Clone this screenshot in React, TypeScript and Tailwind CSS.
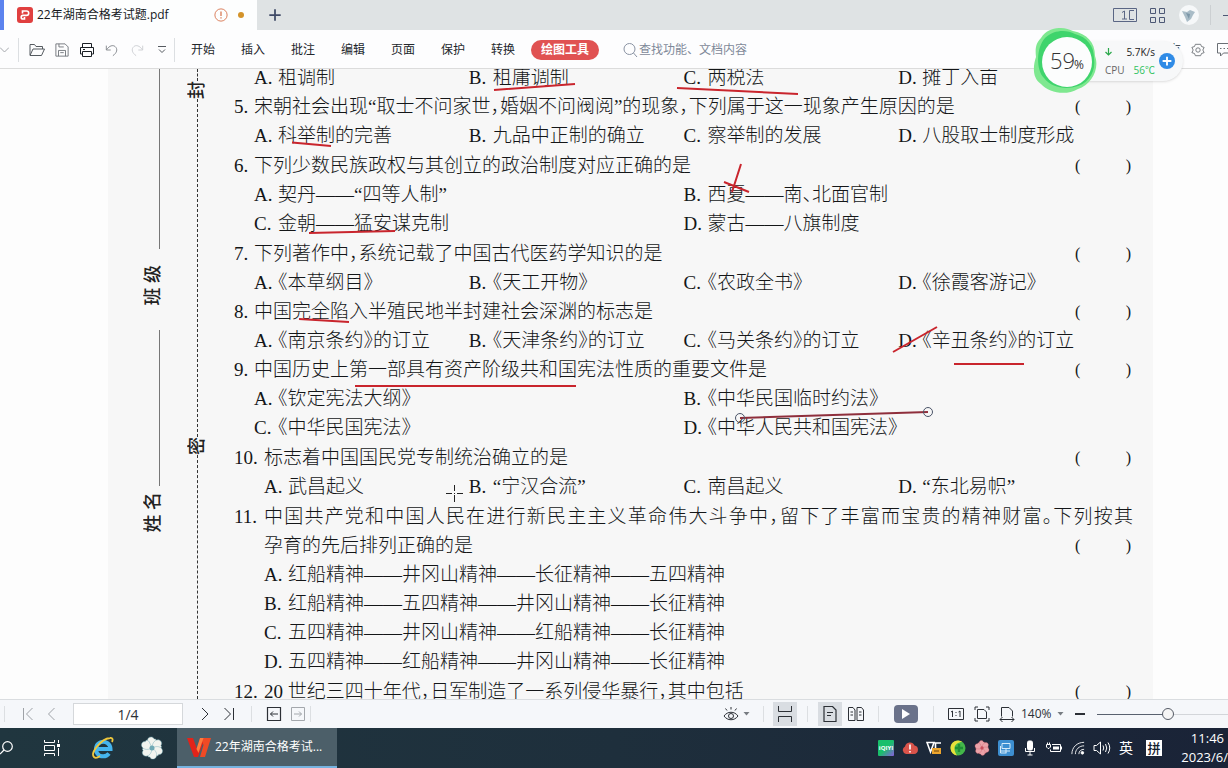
import { useState, type ReactNode } from "react";

const UI_FONT = "font-['Open_Sans','Noto_Sans_CJK_SC',sans-serif]";
const PAPER_FONT = "font-['Liberation_Serif','Noto_Sans_CJK_SC',serif]";

interface Option {
  label: string;
  text: string;
}

interface Question {
  no?: number;
  stem?: string[];
  cols: number;
  spaced?: boolean;
  options: Option[];
}

function opts(...texts: string[]): Option[] {
  return texts.map((text, i) => ({ label: "ABCD"[i] + ".", text }));
}

const questions: Question[] = [
  { cols: 4, options: opts("租调制", "租庸调制", "两税法", "摊丁入亩") },
  {
    no: 5,
    stem: ["宋朝社会出现“取士不问家世，婚姻不问阀阅”的现象，下列属于这一现象产生原因的是"],
    cols: 4,
    options: opts("科举制的完善", "九品中正制的确立", "察举制的发展", "八股取士制度形成"),
  },
  {
    no: 6,
    stem: ["下列少数民族政权与其创立的政治制度对应正确的是"],
    cols: 2,
    spaced: true,
    options: opts("契丹——“四等人制”", "西夏——南、北面官制", "金朝——猛安谋克制", "蒙古——八旗制度"),
  },
  {
    no: 7,
    stem: ["下列著作中，系统记载了中国古代医药学知识的是"],
    cols: 4,
    spaced: true,
    options: opts("《本草纲目》", "《天工开物》", "《农政全书》", "《徐霞客游记》"),
  },
  {
    no: 8,
    stem: ["中国完全陷入半殖民地半封建社会深渊的标志是"],
    cols: 4,
    options: opts("《南京条约》的订立", "《天津条约》的订立", "《马关条约》的订立", "《辛丑条约》的订立"),
  },
  {
    no: 9,
    stem: ["中国历史上第一部具有资产阶级共和国宪法性质的重要文件是"],
    cols: 2,
    options: opts("《钦定宪法大纲》", "《中华民国临时约法》", "《中华民国宪法》", "《中华人民共和国宪法》"),
  },
  {
    no: 10,
    stem: ["标志着中国国民党专制统治确立的是"],
    cols: 4,
    spaced: true,
    options: opts("武昌起义", "“宁汉合流”", "南昌起义", "“东北易帜”"),
  },
  {
    no: 11,
    stem: [
      "中国共产党和中国人民在进行新民主主义革命伟大斗争中，留下了丰富而宝贵的精神财富。下列按其",
      "孕育的先后排列正确的是",
    ],
    cols: 1,
    spaced: true,
    options: opts(
      "红船精神——井冈山精神——长征精神——五四精神",
      "红船精神——五四精神——井冈山精神——长征精神",
      "五四精神——井冈山精神——红船精神——长征精神",
      "五四精神——红船精神——井冈山精神——长征精神"
    ),
  },
  { no: 12, stem: ["20 世纪三四十年代，日军制造了一系列侵华暴行，其中包括"], cols: 4, spaced: true, options: [] },
];

const gridCols: Record<number, string> = {
  1: "grid-cols-1",
  2: "grid-cols-2",
  4: "grid-cols-4",
};

function Svg({ size = 16, className = "", children }: { size?: number; className?: string; children: ReactNode }) {
  return (
    <svg
      width={size}
      height={size}
      viewBox="0 0 16 16"
      fill="none"
      stroke="currentColor"
      strokeWidth="1"
      className={`shrink-0 ${className}`}
      aria-hidden="true"
    >
      {children}
    </svg>
  );
}

function IconButton({ label, className = "w-6", children }: { label: string; className?: string; children: ReactNode }) {
  return (
    <button aria-label={label} className={`flex h-6 shrink-0 items-center justify-center ${className}`}>
      {children}
    </button>
  );
}

function Sep({ className = "" }: { className?: string }) {
  return <span className={`h-4 w-px shrink-0 bg-[#dcdfe2] ${className}`} />;
}

function Caret() {
  return (
    <svg width="7" height="4" viewBox="0 0 7 4" className="shrink-0" aria-hidden="true">
      <path d="M0.5 0h6L3.5 3.5z" fill="#777c82" />
    </svg>
  );
}

function TitleBar() {
  return (
    <header className="flex h-[30px] shrink-0 items-center bg-[#dfe3e4]">
      <span className="h-full w-1 bg-[#5b83ee]" />
      <div className="flex h-full w-[253px] items-center bg-[#fdfefe] pl-[13px]">
        <svg width="16" height="16" viewBox="0 0 16 16" aria-hidden="true">
          <rect width="16" height="16" rx="3" fill="#e0403f" />
          <path
            d="M5.500 6.500V4h4a2.200 2.200 0 0 1 0 4.400H6a1.800 1.800 0 0 0 0 3.600h1.500V10"
            fill="none"
            stroke="#fff"
            strokeWidth="1.600"
          />
        </svg>
        <span className="ml-1 flex-1 text-xs text-[#15181c]">22年湖南合格考试题.pdf</span>
        <Svg size={14} className="text-[#d6714a]">
          <circle cx="8" cy="8" r="7" />
          <path d="M8 4v5M8 10.5v1.5" strokeWidth="1.4" />
        </Svg>
        <span className="mr-[13px] ml-2.5 size-1.5 rounded-full bg-[#d4932a]" />
      </div>
      <IconButton label="新建标签" className="ml-1.5 w-6">
        <Svg size={14} className="text-[#3f4a66]">
          <path d="M8 1.5v13M1.5 8h13" strokeWidth="2" />
        </Svg>
      </IconButton>
      <div className="flex-1" />
      <IconButton label="阅读模式" className="w-6">
        <svg width="24" height="14" viewBox="0 0 24 14" fill="none" stroke="#5a6684" aria-hidden="true">
          <path d="M0.5 0.5h23v13H0.5z" />
          <path d="M9 4.500l2.500-1.500V11M9 11h5M21 2.500h-4.500v9H21" />
        </svg>
      </IconButton>
      <IconButton label="应用" className="ml-2 w-6">
        <svg width="15" height="15" viewBox="0 0 15 15" fill="none" stroke="#4d5875" aria-hidden="true">
          <path d="M0.5 0.5h5v5h-5zM9.5 0.5h5v5h-5zM0.5 9.5h5v5h-5zM9.5 9.5h5v5h-5z" />
        </svg>
      </IconButton>
      <IconButton label="账户" className="ml-2 w-6">
        <svg width="20" height="20" viewBox="0 0 20 20" aria-hidden="true">
          <circle cx="10" cy="10" r="10" fill="#f6f8f9" />
          <path d="M3 6l5 1 3-2 5 2-2 3-2 4-4 3-2-5z" fill="#a9bcc7" />
          <path d="M7 8l4 1-1 5z" fill="#7c97a8" />
        </svg>
      </IconButton>
      <span className="ml-[9px] h-5 w-px bg-[#ccd0d2]" />
      <span className="ml-3 h-px w-[5px] bg-[#4d5875]" />
    </header>
  );
}

function Toolbar() {
  return (
    <div className="z-10 flex h-[39px] shrink-0 items-center border-b border-[#dcdcdc] bg-[#fdfdfe] pt-px">
      <IconButton label="更多" className="w-[9px]">
        <svg width="9" height="6" viewBox="0 0 9 6" fill="none" stroke="#a5a8ad" aria-hidden="true">
          <path d="M0 0.5l4.5 4.5L9 0.5" />
        </svg>
      </IconButton>
      <Sep className="mr-[5px] ml-[9px] h-6" />
      <IconButton label="打开" className="w-[25px]">
        <Svg className="text-[#555a60]">
          <path d="M1 13V2.5h4.5L7 4.5h6.5V7M1 13.5h11.5L15.5 7H4z" />
        </Svg>
      </IconButton>
      <IconButton label="保存" className="w-[25px]">
        <Svg size={14} className="text-[#6a6f75]">
          <path d="M1 1h10.5L15 4.500V15H1zM4 15V8.500h8V15M4.500 1v3.500H10M6 11h4" />
        </Svg>
      </IconButton>
      <IconButton label="打印" className="w-[25px]">
        <Svg className="text-[#1b1f24]">
          <path d="M3.500 5V1.500h9V5M3.500 12h-2V5.500h13V12h-2M3.500 9.500h9v5h-9zM4 7.500h2" />
        </Svg>
      </IconButton>
      <IconButton label="撤销" className="w-[25px]">
        <Svg size={14} className="text-[#7b8086]">
          <path d="M1.500 3v5h5M2 7.500C5 3 9 2 11.500 4c3.500 3 2 7.500-2.500 10.500" />
        </Svg>
      </IconButton>
      <IconButton label="恢复" className="w-[25px]">
        <Svg size={14} className="text-[#c9ccd0]">
          <path d="M14.500 3v5h-5M14 7.500C11 3 7 2 4.500 4 1 7 2.500 11.500 7 14.500" />
        </Svg>
      </IconButton>
      <IconButton label="自定义" className="w-[25px]">
        <svg width="8" height="8" viewBox="0 0 8 8" fill="none" stroke="#555a60" aria-hidden="true">
          <path d="M0 0.500h8M1 3.500l3 3 3-3" />
        </svg>
      </IconButton>
      <Sep className="h-6" />
      <nav className="flex shrink-0 items-center gap-[26px] pl-4 text-xs text-[#23272c]">
        {["开始", "插入", "批注", "编辑", "页面", "保护", "转换"].map((name) => (
          <button key={name}>{name}</button>
        ))}
      </nav>
      <button className="ml-4 h-5 w-[68px] shrink-0 rounded-full bg-[#e05252] text-xs font-bold text-white">
        绘图工具
      </button>
      <label className="ml-6 flex items-center text-[#8a93a3]">
        <Svg>
          <circle cx="6.500" cy="7" r="5.500" />
          <path d="M10.500 11l3.500 4" />
        </Svg>
        <input
          aria-label="查找"
          placeholder="查找功能、文档内容"
          className="w-[140px] bg-transparent text-xs outline-none placeholder:text-[#7f8999]"
        />
      </label>
      <div className="flex-1" />
      <span className="text-xs text-[#23272c]">有</span>
      <IconButton label="设置" className="ml-[5px] w-6">
        <Svg size={14} className="text-[#6a6f75]">
          <path d="M5 1.500h6l1 2.500 3 1-1.500 3 1.500 3-3 1-1 2.500H5L4 12l-3-1 1.500-3L1 5l3-1z" />
          <circle cx="8" cy="8" r="2.500" />
        </Svg>
      </IconButton>
      <svg width="18" height="14" viewBox="0 0 18 14" fill="none" stroke="#6a6f75" className="shrink-0" aria-hidden="true">
        <path d="M18 0.500H7.500v9.500h3v3l3-3H18M10 5.500h1.500M13.500 5.500H15M17 5.500h1" />
      </svg>
    </div>
  );
}

function SideText({ text }: { text: string }) {
  return (
    <span className="rotate-180 text-lg leading-5 font-medium [text-orientation:sideways] [writing-mode:vertical-rl]">
      {text}
    </span>
  );
}

function BindingMargin() {
  return (
    <div className={`flex w-[126px] shrink-0 pl-[35px] text-[#222] ${PAPER_FONT}`}>
      <div className="flex w-5 flex-col items-center">
        <span className="h-[180px] w-px translate-x-1.5 bg-[#777]" />
        <div className="my-4 flex flex-col">
          <SideText text="班 级" />
        </div>
        <span className="mt-2 h-[156px] w-px translate-x-1.5 bg-[#777]" />
        <div className="my-1.5 flex flex-col">
          <SideText text="姓 名" />
        </div>
      </div>
      <div className="ml-6 flex w-5 flex-col items-center">
        <span className="h-3 border-l border-dashed border-[#333]" />
        <SideText text="封" />
        <span className="h-[338px] border-l border-dashed border-[#333]" />
        <SideText text="密" />
        <span className="flex-1 border-l border-dashed border-[#333]" />
      </div>
    </div>
  );
}

function QuestionBlock({ q }: { q: Question }) {
  const wide = (q.no ?? 0) >= 10;
  const lines = q.stem ?? [];
  return (
    <section className={q.spaced ? "mt-px" : ""}>
      {lines.map((line, i) => {
        const last = i === lines.length - 1;
        return (
          <div key={line} className="flex h-[29px] items-center">
            <span className={wide ? "w-[30px] shrink-0" : "w-5 shrink-0"}>{i === 0 ? `${q.no}.` : ""}</span>
            <p className={last ? "flex-1" : "flex-1 text-justify [text-align-last:justify]"}>{line}</p>
            {last && (
              <span className="flex w-[58px] shrink-0 justify-between pr-0.5 text-base">
                <span>(</span>
                <span>)</span>
              </span>
            )}
          </div>
        );
      })}
      <div className={`ml-5 grid w-[859px] max-w-full ${gridCols[q.cols]}`}>
        {q.options.map((o, i) => (
          <div
            key={o.label}
            className={`flex h-[29px] items-center ${wide && i % q.cols === 0 ? "pl-2.5" : ""}`}
          >
            <span className="w-6 shrink-0">{o.label}</span>
            <span>{o.text}</span>
          </div>
        ))}
      </div>
    </section>
  );
}

function PenMarks() {
  return (
    <svg
      width="1228"
      height="630"
      viewBox="0 69 1228 630"
      className="pointer-events-none absolute top-0 left-0"
      aria-hidden="true"
    >
      <g stroke="#c9252d" strokeWidth="2" fill="none">
        <path d="M494 90L575 84M677 88L798 94M292 142.500L331 146M309 233L395 231M299 319L349 322" />
        <path d="M741 164L732 192M724 182L749 192M893 352L937 327M954 364H1024M355 386H576" />
        <path d="M740 418L928 412" stroke="#8f2f3c" />
      </g>
      <g stroke="#4a5468" fill="none">
        <circle cx="740" cy="418" r="4.500" />
        <circle cx="928" cy="412" r="4.500" />
      </g>
      <path d="M454.500 485v6M454.500 495v7M446 493.500h6M457 493.500h6M454 493.500h1" stroke="#222" />
    </svg>
  );
}

function Document() {
  return (
    <main className="relative flex min-h-0 flex-1 overflow-hidden bg-[#fdfdfd] pr-[75px] pl-[108px]">
      <article className="flex min-w-0 flex-1 bg-[#f7f7f7]">
        <BindingMargin />
        <div
          className={`-mt-1.5 flex min-w-0 flex-1 flex-col pr-5 text-[19px] leading-[29px] font-light whitespace-nowrap text-[#141618] [font-feature-settings:'halt'] ${PAPER_FONT}`}
        >
          {questions.map((q) => (
            <QuestionBlock key={q.no ?? 4} q={q} />
          ))}
        </div>
      </article>
      <PenMarks />
    </main>
  );
}

function StatusBar() {
  const [zoom, setZoom] = useState(55);
  return (
    <div className="z-10 flex h-[29px] shrink-0 items-center border-t border-[#dadde0] bg-[#f5f7fa] pl-1 text-[#2c3036]">
      <Sep className="mr-[11px]" />
      <IconButton label="第一页">
        <Svg className="text-[#9ea2a7]">
          <path d="M3.500 2v12M12.500 2L6.500 8l6 6" />
        </Svg>
      </IconButton>
      <IconButton label="上一页">
        <Svg className="text-[#9ea2a7]">
          <path d="M10.500 2l-6 6 6 6" />
        </Svg>
      </IconButton>
      <input
        aria-label="页码"
        defaultValue="1/4"
        className="ml-[9px] h-[22px] w-[110px] border border-[#d5d8db] bg-white text-center text-sm"
      />
      <IconButton label="下一页" className="ml-2.5 w-6">
        <Svg>
          <path d="M5 2l6 6-6 6" />
        </Svg>
      </IconButton>
      <IconButton label="最后一页">
        <Svg>
          <path d="M3.500 2l6 6-6 6M12.500 2v12" />
        </Svg>
      </IconButton>
      <Sep className="mx-2.5" />
      <IconButton label="后退">
        <Svg>
          <path d="M1.500 1.500h13v13h-13z" strokeWidth="1.200" />
          <path d="M12 8H4.500M7 5.500L4.500 8 7 10.500" />
        </Svg>
      </IconButton>
      <IconButton label="前进">
        <Svg className="text-[#a3a7ac]">
          <path d="M1.500 1.500h13v13h-13zM4 8h7.500M9 5.500L11.500 8 9 10.500" />
        </Svg>
      </IconButton>
      <Sep />
      <div className="flex-1" />
      <IconButton label="护眼模式">
        <Svg>
          <path d="M1 10c3.500-5 10.500-5 14 0-3.500 5-10.500 5-14 0zM8 1v2.500M2.500 2.500L4 4.500M13.500 2.500L12 4.500" />
          <circle cx="8" cy="10" r="2.500" />
        </Svg>
      </IconButton>
      <Caret />
      <Sep className="ml-[13px]" />
      <IconButton label="连续阅读" className="ml-[9px] w-6 bg-[#d9dde2]">
        <Svg>
          <path d="M1.500 0v5.500h13V0M1.500 16v-5.500h13V16" />
        </Svg>
      </IconButton>
      <Sep className="ml-2.5" />
      <IconButton label="单页" className="ml-2.5 w-6 bg-[#d9dde2]">
        <Svg>
          <path d="M2 0.500h8.500L14 4v11.500H2zM5 6.500h6M5 9.500h4" strokeWidth="1.200" />
        </Svg>
      </IconButton>
      <IconButton label="双页" className="ml-0.5 w-6">
        <Svg>
          <path d="M0.500 1.500H5L7 4v10.500H0.500zM9 1.500h4.500l2 2.500v10.500H9zM2.500 6h2.500M2.500 9h2.500M11 6h2.500M11 9h2.500" />
        </Svg>
      </IconButton>
      <Sep className="ml-2.5" />
      <button
        aria-label="放映"
        className="ml-[15px] flex h-[18px] w-6 shrink-0 items-center justify-center rounded-sm bg-[#6a728a]"
      >
        <svg width="8" height="10" viewBox="0 0 8 10" aria-hidden="true">
          <path d="M0 0l8 5-8 5z" fill="#fff" />
        </svg>
      </button>
      <Sep className="ml-[15px]" />
      <IconButton label="实际大小" className="ml-2.5 w-6">
        <Svg>
          <path d="M0.500 2.500h15v11H0.500zM3 6l1.500-1v6M10.500 6L12 5v6M8 6v1M8 9v1" />
        </Svg>
      </IconButton>
      <IconButton label="适合页面" className="ml-0.5 w-6">
        <Svg>
          <path d="M3.500 3.500H10l2.500 2.500v6.500h-9zM1 4V1h3M12 1h3v3M15 12v3h-3M4 15H1v-3" />
        </Svg>
      </IconButton>
      <IconButton label="适合宽度" className="ml-px w-6">
        <Svg>
          <path d="M2.500 10.500v-9H10l3.500 3.500v5.500M1 13.500h14M3.500 11L1 13.500 3.500 16M12.500 11l2.500 2.500-2.500 2.500" />
        </Svg>
      </IconButton>
      <select aria-label="缩放比例" className="ml-0.5 w-9 shrink-0 appearance-none bg-transparent text-xs">
        <option>140%</option>
      </select>
      <Caret />
      <IconButton label="缩小" className="ml-1 w-6">
        <span className="h-0.5 w-2.5 bg-[#2c3036]" />
      </IconButton>
      <input
        type="range"
        aria-label="缩放"
        value={zoom}
        onChange={(e) => setZoom(Number(e.target.value))}
        className="ml-[5px] h-px w-[131px] shrink-0 appearance-none [&::-webkit-slider-thumb]:size-3 [&::-webkit-slider-thumb]:appearance-none [&::-webkit-slider-thumb]:rounded-full [&::-webkit-slider-thumb]:border [&::-webkit-slider-thumb]:border-[#555b66] [&::-webkit-slider-thumb]:bg-[#f5f5f5]"
        style={{ background: `linear-gradient(to right, #59616f ${zoom}%, #d3d6da ${zoom}%)` }}
      />
    </div>
  );
}

const petals = [0, 60, 120, 180, 240, 300];

function Flower({ size, fill, core }: { size: number; fill: string; core: string }) {
  return (
    <svg width={size} height={size} viewBox="0 0 24 24" aria-hidden="true">
      {petals.map((a) => (
        <path
          key={a}
          d="M12 12C7 9 6 4 9 1.500c2.500-1.500 5 0 5 1.500 2-.500 3 1 2 3.500z"
          fill={fill}
          stroke={core}
          strokeWidth="0.400"
          transform={`rotate(${a} 12 12)`}
        />
      ))}
      <circle cx="12" cy="12" r="2.500" fill={core} />
    </svg>
  );
}

function Tray() {
  return (
    <div className="flex shrink-0 items-center text-white">
      <IconButton label="爱奇艺">
        <svg width="16" height="16" viewBox="0 0 16 16" aria-hidden="true">
          <defs>
            <linearGradient id="qiyi" x1="0" y1="0" x2="1" y2="1">
              <stop offset="0.500" stopColor="#19bf6b" />
              <stop offset="1" stopColor="#8a5be0" />
            </linearGradient>
          </defs>
          <rect width="16" height="16" rx="1" fill="url(#qiyi)" />
          <text x="8" y="10" fontSize="6" fontWeight="700" textAnchor="middle" fill="#fff">iQIYI</text>
        </svg>
      </IconButton>
      <IconButton label="云盘">
        <svg width="16" height="14" viewBox="0 0 16 14" aria-hidden="true">
          <path d="M4 13a4 4 0 0 1-1-7.500 5 5 0 0 1 9.500-1A4.300 4.300 0 0 1 12 13z" fill="#d9534a" />
          <path d="M8 3.500v5M8 10v1.500" stroke="#fff" strokeWidth="1.600" />
        </svg>
      </IconButton>
      <IconButton label="驱动">
        <svg width="16" height="14" viewBox="0 0 16 14" fill="none" aria-hidden="true">
          <path d="M1 1.500h7L4.500 11zM15 2H9.500v5" stroke="#fff" strokeWidth="1.600" />
          <path d="M6 7h9v6H6z" fill="#eda52d" />
          <path d="M8 10h5" stroke="#6b4510" />
        </svg>
      </IconButton>
      <IconButton label="安全卫士">
        <svg width="16" height="16" viewBox="0 0 16 16" aria-hidden="true">
          <circle cx="8" cy="8" r="7.500" fill="#43b649" />
          <path d="M0.500 8a7.500 7.500 0 0 1 12-6C8 2 4 5 4.500 9c0 2 1 4 2.500 6.400A7.500 7.500 0 0 1 0.500 8z" fill="#e7e03b" />
          <path d="M9 4v8M5 8h8" stroke="#1f8f35" strokeWidth="2.400" />
        </svg>
      </IconButton>
      <IconButton label="相册">
        <Flower size={16} fill="#eba2a8" core="#c94f5c" />
      </IconButton>
      <IconButton label="电脑">
        <svg width="16" height="16" viewBox="0 0 16 16" aria-hidden="true">
          <rect width="16" height="16" rx="2" fill="#3d8fd1" />
          <path d="M4 3.500h8v5H4zM3 11h9M8 8.500V13M2.500 6v7h6" fill="none" stroke="#d5ebfa" />
        </svg>
      </IconButton>
      <IconButton label="麦克风">
        <Svg>
          <rect x="5.500" y="1" width="5" height="9" rx="1.500" fill="#fff" />
          <path d="M3.500 8v3.500h9V8M8 12v3M5.500 15h5" />
        </Svg>
      </IconButton>
      <IconButton label="电源">
        <Svg>
          <path d="M6 4.500h8.500v7H4.500V9.500M15.500 6.500v3M0.500 4.500h4v2.500l-1.500 1.500h-1L0.500 7zM1.500 2.500v2M3.500 2.500v2" />
          <path d="M7 6.500h6v3H7z" fill="#fff" stroke="none" />
        </Svg>
      </IconButton>
      <IconButton label="网络">
        <Svg size={14}>
          <path d="M1 15C1 7 7 1.500 15 1.500M5 15c0-5.500 4.500-9.500 10-9.500M9 15c0-3.500 2.500-5.500 6-5.500" />
          <circle cx="13" cy="13.500" r="1.500" fill="#fff" />
        </Svg>
      </IconButton>
      <IconButton label="音量">
        <svg width="18" height="16" viewBox="0 0 18 16" fill="none" stroke="#fff" aria-hidden="true">
          <path d="M1 5.500h2.500L7.500 2v12l-4-3.500H1zM10 5.500q1.500 2.500 0 5M12.500 4q2.500 4 0 8M15 2.500q3.500 5.500 0 11" />
        </svg>
      </IconButton>
      <button className="w-6 text-sm">英</button>
      <button className="mr-4 ml-1 flex w-6 justify-center">
        <span className="bg-white px-px text-[13px] leading-4 font-medium text-[#14202e]">拼</span>
      </button>
      <div className="flex w-[46px] flex-col items-end text-[13px] leading-[19px] whitespace-nowrap">
        <time className="pr-1">11:46</time>
        <span>2023/6/</span>
      </div>
    </div>
  );
}

function Taskbar() {
  return (
    <footer className="flex h-10 shrink-0 items-center bg-gradient-to-r from-[#20363f] via-[#1e2f3c] to-[#1a2337] text-white">
      <IconButton label="搜索" className="w-3">
        <svg width="13" height="14" viewBox="0 0 13 14" fill="none" stroke="#fff" className="shrink-0" aria-hidden="true">
          <circle cx="7.500" cy="5.500" r="4.800" strokeWidth="1.200" />
          <path d="M4 9l-4 4" strokeWidth="1.200" />
        </svg>
      </IconButton>
      <IconButton label="任务视图" className="ml-7 w-6">
        <Svg>
          <path d="M0.500 0v2.500h10V0M0.500 16v-2.500h10V16M0.500 5.500h10v5h-10zM14.500 0v3M14.500 8v8" />
          <path d="M13 4h3v3h-3z" fill="#fff" stroke="none" />
        </Svg>
      </IconButton>
      <IconButton label="浏览器" className="ml-[27px] w-6">
        <svg width="24" height="24" viewBox="0 0 24 24" fill="none" aria-hidden="true">
          <path d="M6.500 13h13a7.300 7.300 0 1 0-1.500 4.500" stroke="#45b5ee" strokeWidth="4" />
          <path d="M3 21C-1 17 10 3 19 2c3-.500 3 2 2 4M3 21c1.500 1.500 4 .500 6-1" stroke="#f0c83c" strokeWidth="1.800" />
        </svg>
      </IconButton>
      <IconButton label="看图" className="ml-[25px] w-6">
        <Flower size={24} fill="#f2f4ef" core="#6fa9b5" />
      </IconButton>
      <button className="ml-[13px] flex h-full w-40 shrink-0 items-center border-b-2 border-[#76b3e0] bg-[#4c5f69] pl-2.5 text-xs">
        <svg width="24" height="19" viewBox="0 0 24 19" aria-hidden="true">
          <path d="M0 0h6l4 11 3-11h5l-7 19H7z" fill="#e2231a" />
          <path d="M14 0h10l-6 19h-5l3.500-12z" fill="#f04a25" />
          <path d="M13 0l3.500 0-5 15-2-4z" fill="#ff7b3d" />
        </svg>
        <span className="ml-1">22年湖南合格考试...</span>
      </button>
      <div className="flex-1" />
      <Tray />
    </footer>
  );
}

function SpeedBall() {
  return (
    <aside className="absolute top-7 right-[45px] z-20 flex items-center">
      <svg width="66" height="66" viewBox="0 0 66 66" className="z-10" aria-hidden="true">
        <path
          d="M8 10C16-3 32-1 40 3 54 6 62 14 62 28c5 13-4 29-17 33-12 7-29 4-37-5C-1 50 0 38 3 29 2 20 3 15 8 10z"
          fill="#7fe890"
        />
        <path
          d="M12 10C22 1 34 2 42 6 54 9 61 18 61 30c2 12-4 24-16 28-12 4-26 2-34-8C3 42 3 20 12 10z"
          fill="#3fd46c"
        />
        <circle cx="34" cy="34" r="25" fill="#fcfdfd" />
        <text x="17" y="41" fontSize="22" fontWeight="300" fill="#333" className={UI_FONT}>59</text>
        <text x="41" y="41" fontSize="12" fill="#333" className={UI_FONT}>%</text>
      </svg>
      <div className="-ml-6 flex h-10 items-center rounded-r-full bg-[#f7f8f9] pr-2 pl-[30px] shadow">
        <div className="flex w-[50px] flex-col text-[10px] leading-[18px] whitespace-nowrap">
          <div className="flex items-center justify-between text-[#222]">
            <svg width="7" height="8" viewBox="0 0 7 8" fill="none" stroke="#2aa84a" aria-hidden="true">
              <path d="M3.500 0v7M0.500 4l3 3 3-3" strokeWidth="1.200" />
            </svg>
            <span>5.7K/s</span>
          </div>
          <div className="flex items-center justify-between text-[#666]">
            <span>CPU</span>
            <span className="text-[#2fc25e]">56℃</span>
          </div>
        </div>
        <button aria-label="加速" className="ml-1 flex size-4 items-center justify-center rounded-full bg-[#2f8be6]">
          <Svg size={10} className="text-white">
            <path d="M8 1v14M1 8h14" strokeWidth="3" />
          </Svg>
        </button>
      </div>
    </aside>
  );
}

export default function App() {
  return (
    <div className={`relative flex h-screen flex-col overflow-hidden bg-white ${UI_FONT}`}>
      <TitleBar />
      <Toolbar />
      <Document />
      <StatusBar />
      <Taskbar />
      <SpeedBall />
    </div>
  );
}
